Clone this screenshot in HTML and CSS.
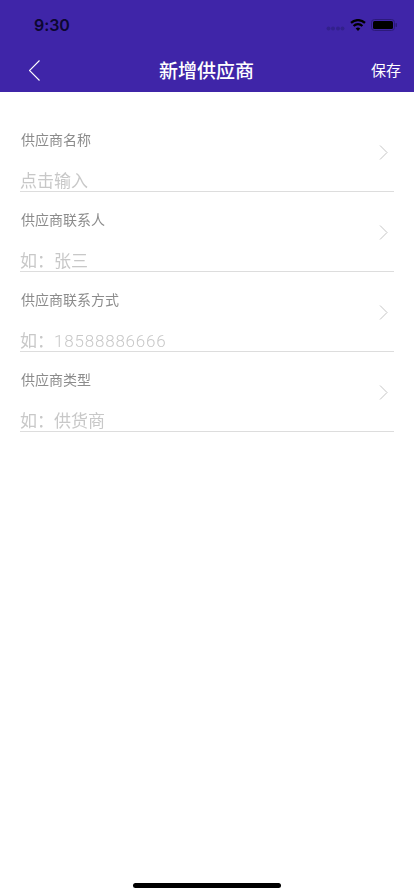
FILE: index.html
```html
<!DOCTYPE html>
<html lang="zh">
<head>
    <meta charset="UTF-8">
    <meta name="viewport" content="width=device-width, initial-scale=1.0">
    <title>新增供应商</title>
    <link rel="stylesheet" href="styles.css">
</head>
<body>
    <div class="page">
        <div class="header">
            <!-- 状态栏 -->
            <div class="status-bar">
                <span class="time">9:30</span>
                <div class="status-icons">
                    <svg class="signal" width="19" height="5" viewBox="0 0 19 5">
                        <circle cx="2.5" cy="2.5" r="2"></circle>
                        <circle cx="7" cy="2.5" r="2"></circle>
                        <circle cx="12" cy="2.5" r="2"></circle>
                        <circle cx="16.5" cy="2.5" r="2"></circle>
                    </svg>
                    <svg class="wifi" width="16" height="12" viewBox="0 0 16 12">
                        <path d="M8 12 L5.7 9.6a3.3 3.3 0 0 1 4.6 0Z"></path>
                        <path d="M3.6 6.9a6.2 6.2 0 0 1 8.8 0" class="wifi-arc"></path>
                        <path d="M1 3.9a10 10 0 0 1 14 0" class="wifi-arc"></path>
                    </svg>
                    <svg class="battery" width="26" height="12" viewBox="0 0 26 12">
                        <rect x="0.5" y="0.5" width="23" height="11" rx="3" class="battery-box"></rect>
                        <rect x="2" y="2" width="20" height="8" rx="1.5"></rect>
                        <rect x="24.5" y="4" width="1.5" height="4" rx="0.7" class="battery-cap"></rect>
                    </svg>
                </div>
            </div>
            <!-- 导航栏 -->
            <div class="nav-bar">
                <svg class="back" width="11" height="21" viewBox="0 0 11 21">
                    <path d="M10.5 0.5 L0.5 10.5 L10.5 20.5"></path>
                </svg>
                <span class="nav-title">新增供应商</span>
                <span class="nav-save">保存</span>
            </div>
        </div>

        <div class="form">
            <div class="field">
                <p class="field-label">供应商名称</p>
                <p class="field-input">点击输入</p>
                <svg class="arrow" width="9" height="15" viewBox="0 0 9 15"><path d="M1 0.5 L8 7.5 L1 14.5"></path></svg>
            </div>
            <div class="field">
                <p class="field-label">供应商联系人</p>
                <p class="field-input">如：张三</p>
                <svg class="arrow" width="9" height="15" viewBox="0 0 9 15"><path d="M1 0.5 L8 7.5 L1 14.5"></path></svg>
            </div>
            <div class="field">
                <p class="field-label">供应商联系方式</p>
                <p class="field-input">如：<span class="digits">18588886666</span></p>
                <svg class="arrow" width="9" height="15" viewBox="0 0 9 15"><path d="M1 0.5 L8 7.5 L1 14.5"></path></svg>
            </div>
            <div class="field">
                <p class="field-label">供应商类型</p>
                <p class="field-input">如：供货商</p>
                <svg class="arrow" width="9" height="15" viewBox="0 0 9 15"><path d="M1 0.5 L8 7.5 L1 14.5"></path></svg>
            </div>
        </div>

        <div class="home-bar"></div>
    </div>
</body>
</html>
```
FILE: styles.css
```css
body {
    margin: 0;
    background-color: #fff;
    font-family: "Liberation Sans", "Noto Sans CJK SC", sans-serif;
}
p {
    margin: 0;
}
.page {
    height: 896px;
    display: flex;
    flex-direction: column;
    overflow: hidden;
}
.header {
    height: 92px;
    background-color: #3f25a8;
    color: #fff;
}
.status-bar {
    height: 50px;
    padding: 0 17px 0 34px;
    display: flex;
    align-items: center;
    justify-content: space-between;
}
.time {
    font-family: Inter, sans-serif;
    font-size: 16px;
    font-weight: 600;
    letter-spacing: -0.1px;
    color: #0c0730;
}
.status-icons {
    display: flex;
    align-items: center;
    gap: 5px;
}
.signal {
    margin-top: 7px;
    fill: #32208c;
}
.wifi {
    fill: #000;
}
.wifi-arc {
    fill: none;
    stroke: #000;
    stroke-width: 2.2;
}
.battery rect {
    fill: #000;
}
.battery .battery-box {
    fill: none;
    stroke: #2c1a7a;
}
.battery .battery-cap {
    fill: #2c1a7a;
}
.nav-bar {
    height: 42px;
    box-sizing: border-box;
    padding: 0 13px 4px 29px;
    display: flex;
    align-items: center;
    justify-content: space-between;
}
.back {
    margin: 2px 2px 0 0;
}
.back path {
    fill: none;
    stroke: #fff;
    stroke-width: 1.1;
}
.nav-title {
    font-size: 19px;
    font-weight: 500;
}
.nav-save {
    font-size: 15px;
}
.form {
    flex: 1;
    padding: 20px 20px 0;
    transform: translateZ(0);
}
.field {
    position: relative;
    height: 80px;
    box-sizing: border-box;
    padding-top: 18px;
    border-bottom: 1px solid #dddddd;
}
.field-label {
    padding-left: 1px;
    font-size: 14px;
    line-height: 20px;
    color: #8c8c8c;
}
.field-input {
    margin-top: 22px;
    font-size: 17px;
    line-height: 19px;
    color: #c8c8c8;
}
.digits {
    font-family: Roboto, sans-serif;
    font-weight: 300;
    letter-spacing: 0.8px;
}
.arrow {
    position: absolute;
    right: 6px;
    top: 32.5px;
}
.arrow path {
    fill: none;
    stroke: #c4c4c4;
    stroke-width: 1;
}
.home-bar {
    width: 148px;
    height: 5px;
    margin: 0 auto 8px;
    border-radius: 3px;
    background-color: #000;
}
```
